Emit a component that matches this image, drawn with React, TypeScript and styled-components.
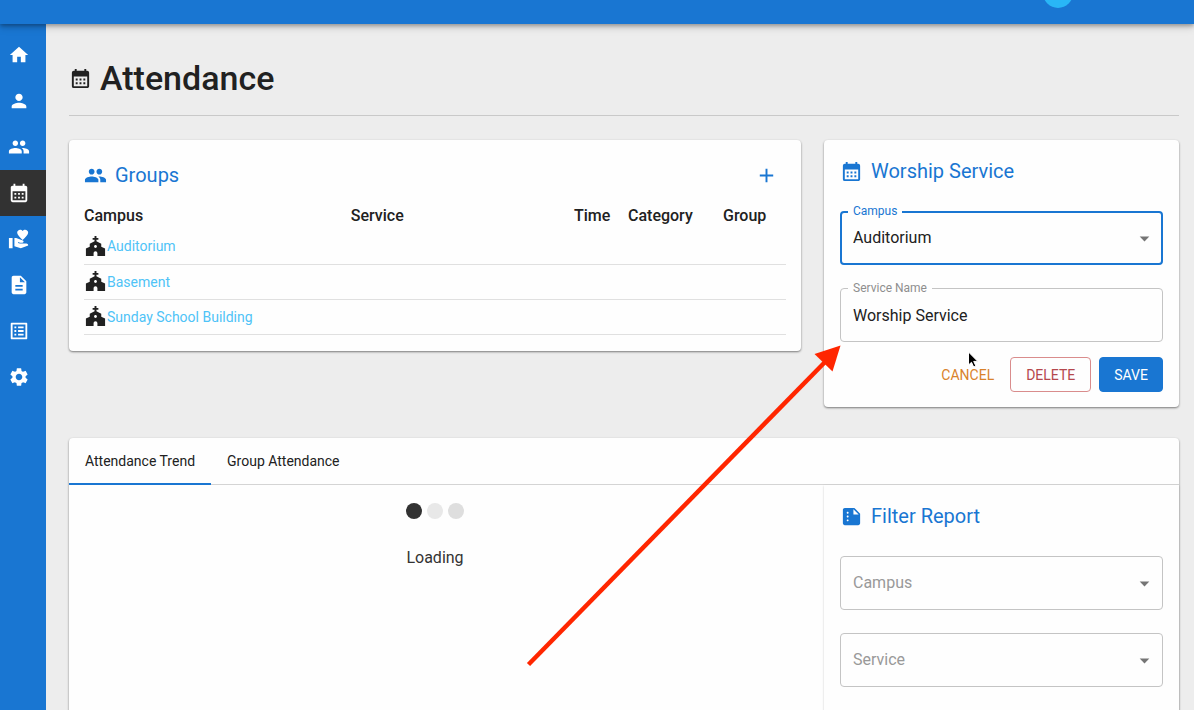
import React from "react";
import styled, { createGlobalStyle, css } from "styled-components";
import {
  MdAdd,
  MdArrowDropDown,
  MdCalendarMonth,
  MdChurch,
  MdDescription,
  MdHome,
  MdListAlt,
  MdPeople,
  MdPerson,
  MdSettings,
  MdSummarize,
  MdVolunteerActivism,
} from "react-icons/md";

const blue = "#1976d2";

const GlobalStyle = createGlobalStyle`
  *, *::before, *::after { box-sizing: border-box; }
  body {
    margin: 0;
    background: #ededed;
    color: #212121;
    font-family: Roboto, "Liberation Sans", sans-serif;
    font-size: 16px;
    line-height: 24px;
  }
  html, body { height: 100%; overflow: hidden; }
  #root { height: 100%; }
  button, input, select { font: inherit; color: inherit; }
`;

const Page = styled.div`
  display: flex;
  flex-direction: column;
  height: 100%;
  overflow: hidden;
`;

const AppBar = styled.header`
  position: relative;
  z-index: 2;
  flex: none;
  display: flex;
  align-items: center;
  height: 62px;
  margin-top: -38px;
  padding: 0 121px 0 12px;
  background: ${blue};
  color: #fff;
  box-shadow: 0 2px 4px rgba(0, 0, 0, 0.3), 0 4px 8px rgba(0, 0, 0, 0.12);
`;

const Avatar = styled.span`
  width: 30px;
  height: 30px;
  margin-left: auto;
  border-radius: 50%;
  background: #29b6f6;
`;

const Body = styled.div`
  flex: 1;
  display: flex;
  min-height: 0;
`;

const Sidebar = styled.nav`
  flex: none;
  width: 46px;
  padding-top: 8px;
  background: ${blue};
`;

const NavLink = styled.a<{ $active?: boolean }>`
  display: flex;
  align-items: center;
  height: 46px;
  padding-left: 8px;
  font-size: 22px;
  color: #fff;
  background: ${(p) => (p.$active ? "#323232" : "transparent")};
`;

const Main = styled.main`
  flex: 1;
  min-width: 0;
  padding: 32px 15px 0 23px;
`;

const PageTitle = styled.h1`
  display: flex;
  align-items: center;
  gap: 8px;
  margin: 0 0 24px;
  padding-bottom: 15px;
  border-bottom: 1px solid #c9c9c9;
  font-size: 34px;
  line-height: 44px;
  font-weight: 500;

  svg { font-size: 23px; }
`;

const Columns = styled.div`
  display: grid;
  grid-template-columns: minmax(0, 1fr) 355px;
  column-gap: 23px;
  align-items: start;
`;

const Card = styled.section`
  border-radius: 4px;
  background: #fefefe;
  box-shadow: 0 1px 2px rgba(0, 0, 0, 0.4), 0 1px 3px rgba(0, 0, 0, 0.12);
`;

const GroupsCard = styled(Card)`
  padding: 20px 15px 16px;
`;

const ServiceCard = styled(Card)`
  padding: 16px 16px 15px;
`;

const CardHeader = styled.header`
  display: flex;
  align-items: center;
  height: 30px;
`;

const CardTitle = styled.h2`
  display: flex;
  align-items: center;
  gap: 8px;
  margin: 0;
  font-size: 20px;
  line-height: 30px;
  font-weight: 400;
  color: ${blue};

  svg { font-size: 23px; }
`;

const IconButton = styled.button`
  display: flex;
  margin-left: auto;
  padding: 8px;
  border: 0;
  background: none;
  color: ${blue};
  font-size: 23px;
`;

const Table = styled.table`
  width: 100%;
  margin-top: 12px;
  border-collapse: collapse;
  table-layout: fixed;
`;

const HeadCell = styled.th`
  height: 27px;
  padding: 0;
  text-align: left;
  font-weight: 500;
`;

const Cell = styled.td`
  height: 35px;
  padding: 0;
  border-bottom: 1px solid #e0e0e0;
`;

const CampusCell = styled.div`
  display: flex;
  align-items: center;
  font-size: 14px;

  svg { font-size: 23px; }
  a { color: #4fc3f7; text-decoration: none; }
`;

const Field = styled.div`
  position: relative;
  display: flex;
`;

const Fields = styled.div`
  display: flex;
  flex-direction: column;
  gap: 23px;
  margin-top: 25px;
`;

const control = css<{ $active?: boolean; $empty?: boolean }>`
  width: 100%;
  height: 54px;
  margin: 0;
  border: ${(p) => (p.$active ? `2px solid ${blue}` : "1px solid #c4c4c4")};
  padding: 0 ${(p) => (p.$active ? 11 : 12)}px;
  border-radius: 4px;
  background: #fefefe;
  outline: 0;
  color: ${(p) => (p.$empty ? "#999" : "#212121")};
`;

const TextInput = styled.input`
  ${control}
`;

const Select = styled.select`
  ${control}
  appearance: none;
`;

const FloatingLabel = styled.label<{ $active?: boolean }>`
  position: absolute;
  top: -8px;
  left: 8px;
  padding: 0 5px;
  background: #fefefe;
  font-size: 12px;
  line-height: 16px;
  color: ${(p) => (p.$active ? blue : "#8e8e8e")};
`;

const Arrow = styled(MdArrowDropDown)`
  position: absolute;
  top: 16px;
  right: 7px;
  font-size: 23px;
  color: #757575;
  pointer-events: none;
`;

const Actions = styled.div`
  display: flex;
  justify-content: flex-end;
  gap: 8px;
  margin-top: 15px;
`;

const tones = {
  text: css`
    color: #d9822b;
    background: none;
    border-color: transparent;
    padding: 0 7px;
  `,
  outlined: css`
    color: #b5484d;
    background: none;
    border-color: #d98c8c;
    padding: 0 15px;
  `,
  filled: css`
    color: #fff;
    background: ${blue};
    border-color: ${blue};
    padding: 0 14px;
  `,
};

const Button = styled.button<{ $tone: keyof typeof tones }>`
  height: 35px;
  border: 1px solid;
  border-radius: 4px;
  font-size: 14px;
  ${(p) => tones[p.$tone]}
`;

const ReportCard = styled(Card)`
  height: 400px;
  margin-top: 31px;
`;

const Tabs = styled.div`
  display: flex;
  height: 47px;
  border-bottom: 1px solid #d4d4d4;
`;

const Tab = styled.button<{ $active?: boolean }>`
  height: 47px;
  padding: 0 16px;
  border: 0;
  border-bottom: 2px solid ${(p) => (p.$active ? blue : "transparent")};
  background: none;
  font-size: 14px;
`;

const ReportBody = styled(Columns)`
  column-gap: 0;
  align-items: stretch;
  height: 352px;
`;

const Loading = styled.div`
  display: flex;
  flex-direction: column;
  align-items: center;
  gap: 27px;
  padding: 18px 23px 0 0;
  color: #333;
`;

const Dots = styled.div`
  display: flex;
  gap: 5px;
`;

const Dot = styled.span<{ $color: string }>`
  width: 16px;
  height: 16px;
  border-radius: 50%;
  background: ${(p) => p.$color};
`;

const FilterPanel = styled.section`
  padding: 16px 16px 0;
  box-shadow: 0 1px 2px rgba(0, 0, 0, 0.2);
`;

const Overlay = styled.svg`
  position: absolute;
  z-index: 3;
  pointer-events: none;
`;

const ArrowMark = styled(Overlay)`
  left: 520px;
  top: 340px;
`;

const Pointer = styled(Overlay)`
  left: 966px;
  top: 350px;
`;

const navItems = [
  { label: "Home", Icon: MdHome },
  { label: "Person", Icon: MdPerson },
  { label: "People", Icon: MdPeople },
  { label: "Attendance", Icon: MdCalendarMonth, active: true },
  { label: "Donations", Icon: MdVolunteerActivism },
  { label: "Documents", Icon: MdDescription },
  { label: "Lists", Icon: MdListAlt },
  { label: "Settings", Icon: MdSettings },
];

const campuses = ["Auditorium", "Basement", "Sunday School Building"];

function FilterSelect({ name }: { name: string }) {
  return (
    <Field>
      <Select $empty aria-label={name} defaultValue="">
        <option value="">{name}</option>
      </Select>
      <Arrow />
    </Field>
  );
}

export default function App() {
  return (
    <>
      <GlobalStyle />
      <Page>
        <AppBar>
          <Avatar />
        </AppBar>
        <Body>
          <Sidebar>
            {navItems.map(({ label, Icon, active }) => (
              <NavLink key={label} href="#" aria-label={label} $active={active}>
                <Icon />
              </NavLink>
            ))}
          </Sidebar>
          <Main>
            <PageTitle>
              <MdCalendarMonth />
              Attendance
            </PageTitle>
            <Columns>
              <GroupsCard>
                <CardHeader>
                  <CardTitle>
                    <MdPeople />
                    Groups
                  </CardTitle>
                  <IconButton aria-label="Add">
                    <MdAdd />
                  </IconButton>
                </CardHeader>
                <Table>
                  <colgroup>
                    <col width="38%" />
                    <col />
                    <col width="54" />
                    <col width="95" />
                    <col width="63" />
                  </colgroup>
                  <thead>
                    <tr>
                      <HeadCell>Campus</HeadCell>
                      <HeadCell>Service</HeadCell>
                      <HeadCell>Time</HeadCell>
                      <HeadCell>Category</HeadCell>
                      <HeadCell>Group</HeadCell>
                    </tr>
                  </thead>
                  <tbody>
                    {campuses.map((name) => (
                      <tr key={name}>
                        <Cell>
                          <CampusCell>
                            <MdChurch />
                            <a href="#">{name}</a>
                          </CampusCell>
                        </Cell>
                        <Cell />
                        <Cell />
                        <Cell />
                        <Cell />
                      </tr>
                    ))}
                  </tbody>
                </Table>
              </GroupsCard>
              <ServiceCard>
                <CardHeader>
                  <CardTitle>
                    <MdCalendarMonth />
                    Worship Service
                  </CardTitle>
                </CardHeader>
                <Fields>
                  <Field>
                    <Select id="campus" $active defaultValue="Auditorium">
                      {campuses.map((name) => (
                        <option key={name}>{name}</option>
                      ))}
                    </Select>
                    <FloatingLabel htmlFor="campus" $active>
                      Campus
                    </FloatingLabel>
                    <Arrow />
                  </Field>
                  <Field>
                    <TextInput id="service-name" defaultValue="Worship Service" />
                    <FloatingLabel htmlFor="service-name">Service Name</FloatingLabel>
                  </Field>
                </Fields>
                <Actions>
                  <Button $tone="text">CANCEL</Button>
                  <Button $tone="outlined">DELETE</Button>
                  <Button $tone="filled">SAVE</Button>
                </Actions>
              </ServiceCard>
            </Columns>
            <ReportCard>
              <Tabs>
                <Tab $active>Attendance Trend</Tab>
                <Tab>Group Attendance</Tab>
              </Tabs>
              <ReportBody>
                <Loading>
                  <Dots>
                    <Dot $color="#323232" />
                    <Dot $color="#e8e8e8" />
                    <Dot $color="#dedede" />
                  </Dots>
                  Loading
                </Loading>
                <FilterPanel>
                  <CardTitle>
                    <MdSummarize />
                    Filter Report
                  </CardTitle>
                  <Fields>
                    <FilterSelect name="Campus" />
                    <FilterSelect name="Service" />
                  </Fields>
                </FilterPanel>
              </ReportBody>
            </ReportCard>
          </Main>
        </Body>
      </Page>
      <ArrowMark width="330" height="330" viewBox="520 340 330 330" aria-hidden="true">
        <path d="M528.5 664.5 827 360" stroke="#ff2600" strokeWidth="4.5" />
        <path d="M840.5 345.5 832.5 371.5 814.5 354Z" fill="#ff2600" />
      </ArrowMark>
      <Pointer width="14" height="20" viewBox="0 0 14 20" aria-hidden="true">
        <path
          d="M2.5 2v13l3-2.700 2.200 4.700 2.200-1-2.200-4.600h4.100Z"
          fill="#000"
          stroke="#fff"
          strokeWidth="1"
        />
      </Pointer>
    </>
  );
}
